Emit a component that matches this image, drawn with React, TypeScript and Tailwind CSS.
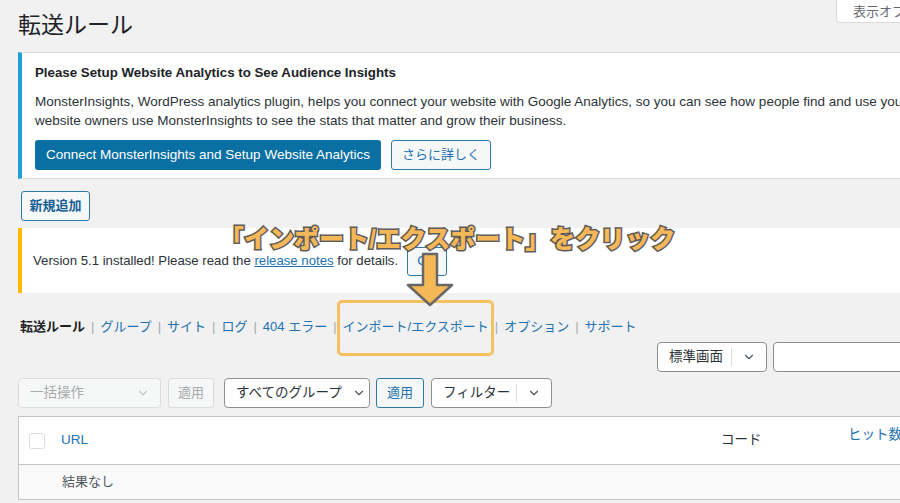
import { ChevronDown } from 'lucide-react';

const font = "font-['Liberation_Sans','Noto_Sans_CJK_JP',sans-serif]";

function Select({
  label,
  width,
  split,
  disabled,
}: {
  label: string;
  width: string;
  split?: boolean;
  disabled?: boolean;
}) {
  return (
    <div
      className={`flex h-[30px] items-center justify-between whitespace-nowrap rounded-[4px] border pl-[11px] text-[13.5px] ${width} ${
        disabled ? 'border-[#dcdcde] bg-[#f6f7f7] text-[#a7aaad]' : 'border-[#8c8f94] bg-white text-[#2c3338]'
      }`}
    >
      <span>{label}</span>
      <div className="flex h-full items-center">
        {split && <span className="h-[18px] w-px bg-[#dcdcde]" />}
        <ChevronDown
          className={`mx-[10px] size-[14px] ${disabled ? 'text-[#c3c4c7]' : 'text-[#50575e]'}`}
          strokeWidth={2}
        />
      </div>
    </div>
  );
}

export default function App() {
  const links = ['グループ', 'サイト', 'ログ', '404 エラー', 'インポート/エクスポート', 'オプション', 'サポート'];

  return (
    <div className={`relative h-[503px] w-[900px] overflow-hidden bg-[#f1f1f1] ${font}`}>
      <div className="w-[1000px] pl-[18px]">
        {/* heading */}
        <div className="flex items-start">
          <h1 className="mt-[10px] text-[23px] leading-[31px] text-[#1d2327]">転送ルール</h1>
          <div className="ml-auto mr-[20px] h-[23px] w-[144px] rounded-b-[4px] border border-t-0 border-[#dcdcde] bg-white pl-[16px] pt-[2px] text-[13px] text-[#646970]">
            表示オプション
          </div>
        </div>

        {/* MonsterInsights notice */}
        <div className="mt-[11px] w-[960px] border border-l-4 border-[#dcdcde] border-l-[#1ea0d6] bg-white pb-[8px] pl-[13px] pt-[10px]">
          <p className="text-[13.3px] font-bold leading-[20px] text-[#1d2327]">
            Please Setup Website Analytics to See Audience Insights
          </p>
          <p className="mt-[9px] whitespace-nowrap text-[13.5px] leading-[19px] text-[#2c3338]">
            MonsterInsights, WordPress analytics plugin, helps you connect your website with Google Analytics, so you can see how people find and use your website. Over 3 million
            <br />
            website owners use MonsterInsights to see the stats that matter and grow their business.
          </p>
          <div className="mt-[10px] flex gap-[10px]">
            <button className="h-[30px] rounded-[3px] bg-[#0a6fa2] px-[11px] text-[13.5px] text-white">
              Connect MonsterInsights and Setup Website Analytics
            </button>
            <button className="h-[30px] rounded-[3px] border border-[#2d7ba8] bg-[#f6f7f7] px-[10px] text-[13px] text-[#2271b1]">
              さらに詳しく
            </button>
          </div>
        </div>

        {/* add new */}
        <button className="ml-[3px] mt-[12px] h-[30px] w-[69px] rounded-[3px] border border-[#2d7ba8] bg-[#f6f7f7] text-[13px] font-bold text-[#135e96]">
          新規追加
        </button>

        {/* version notice */}
        <div className="mt-[7px] flex h-[65px] w-[960px] items-center border-l-4 border-[#ffb900] bg-white pl-[11px]">
          <p className="text-[13.2px] text-[#2c3338]">
            Version 5.1 installed! Please read the{' '}
            <span className="text-[#2271b1] underline">release notes</span> for details.
          </p>
          <button className="ml-[9px] mt-[2px] h-[29px] w-[40px] rounded-[3px] border border-[#2d7ba8] bg-[#f6f7f7] text-[13.5px] text-[#2271b1]">
            OK
          </button>
        </div>

        {/* sub nav */}
        <div className="mt-[25px] flex h-[18px] items-center pl-[2px] text-[13px]">
          <span className="font-bold text-[#1d2327]">転送ルール</span>
          {links.map((l) => (
            <span key={l} className="flex items-center">
              <span className="mx-[6px] text-[#a7aaad]">|</span>
              <span className="text-[#2271b1]">{l}</span>
            </span>
          ))}
        </div>

        {/* search row */}
        <div className="mt-[6px] flex justify-end gap-[6px]">
          <Select label="標準画面" width="w-[110px]" split />
          <div className="h-[30px] w-[227px] rounded-[4px] border border-[#8c8f94] bg-white" />
        </div>

        {/* tablenav */}
        <div className="mt-[6px] flex items-center">
          <Select label="一括操作" width="w-[143px]" disabled />
          <button className="ml-[7px] h-[30px] w-[46px] rounded-[3px] border border-[#dcdcde] bg-[#f6f7f7] text-[13px] text-[#a7aaad]">
            適用
          </button>
          <div className="ml-[10px]">
            <Select label="すべてのグループ" width="w-[146px]" />
          </div>
          <button className="ml-[6px] h-[30px] w-[48px] rounded-[3px] border border-[#2d7ba8] bg-[#f6f7f7] text-[13px] text-[#2271b1]">
            適用
          </button>
          <div className="ml-[7px]">
            <Select label="フィルター" width="w-[121px]" split />
          </div>
        </div>

        {/* table */}
        <div className="mt-[8px] w-[982px] border border-[#c3c4c7] bg-white">
          <div className="grid h-[48px] grid-cols-[32px_660px_127px_1fr] border-b border-[#c3c4c7] text-[13.5px]">
            <div className="flex items-center pl-[10px]">
              <span className="size-[16px] rounded-[3px] border border-[#dcdcde] bg-white" />
            </div>
            <div className="flex items-center pl-[10px] text-[#2271b1]">URL</div>
            <div className="flex items-center pl-[10px] text-[#2c3338]">コード</div>
            <div className="pl-[10px] pt-[8px] text-[#2271b1]">ヒット数</div>
          </div>
          <div className="flex h-[34px] items-center bg-[#f9f9f9] pl-[43px] text-[13px] text-[#50575e]">
            結果なし
          </div>
        </div>
      </div>

      {/* annotation overlay */}
      <div className="absolute left-[337px] top-[300px] h-[56px] w-[157px] rounded-[5px] border-[3px] border-[#f6c063]" />
      <p className="absolute left-[219px] top-[222px] whitespace-nowrap text-[25px] font-black leading-[34px] text-[#f6b756] [-webkit-text-stroke:3px_#5c5c5c] [paint-order:stroke_fill]">
        「インポート/エクスポート」をクリック
      </p>
      <svg className="absolute left-[404px] top-[252px]" width="52" height="56" viewBox="0 0 52 56">
        <path
          d="M19 2 H33 V33 H48 L26 53 L4 33 H19 Z"
          fill="#f6b756"
          stroke="#676767"
          strokeWidth="2.5"
          strokeLinejoin="round"
        />
      </svg>
    </div>
  );
}
